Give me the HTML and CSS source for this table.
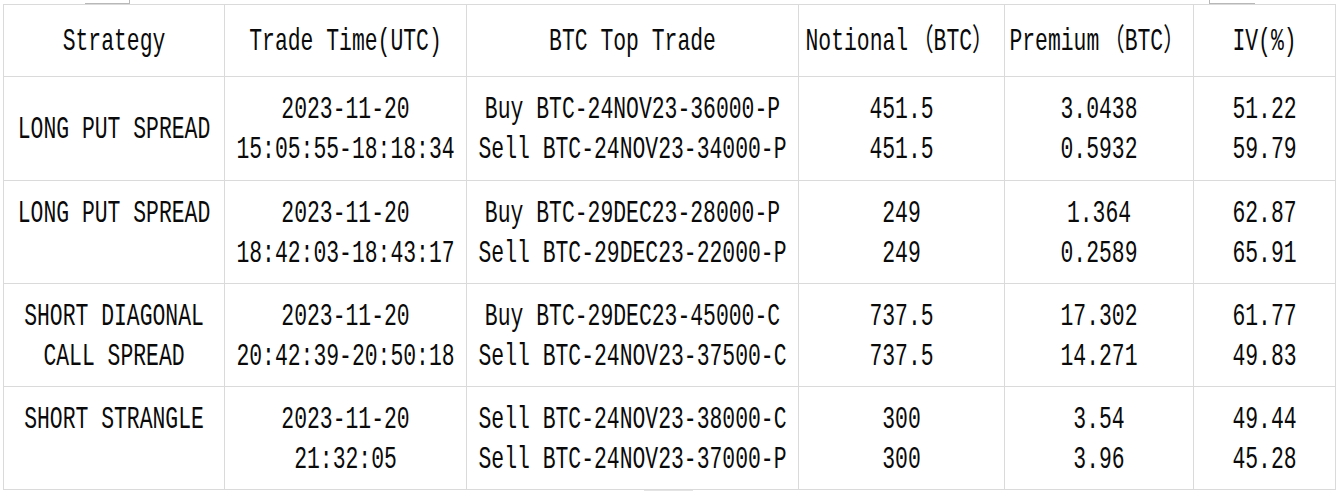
FILE: index.html
```html
<!DOCTYPE html>
<html>
<head>
<meta charset="utf-8">
<link rel="stylesheet" href="styles.css">
</head>
<body>
<div class="page">
  <span class="stub stub-a"></span>
  <span class="stub stub-b"></span>
  <span class="stub stub-c"></span>
  <div class="grid">
    <div class="cell head"><div class="txt"><div>Strategy</div></div></div>
    <div class="cell head"><div class="txt"><div>Trade Time(UTC)</div></div></div>
    <div class="cell head"><div class="txt"><div>BTC Top Trade</div></div></div>
    <div class="cell head"><div class="txt"><div>Notional<span class="fwl">（</span>BTC<span class="fwr">）</span></div></div></div>
    <div class="cell head"><div class="txt"><div>Premium<span class="fwl">（</span>BTC<span class="fwr">）</span></div></div></div>
    <div class="cell head"><div class="txt"><div>IV(%)</div></div></div>

    <div class="cell"><div class="txt"><div>LONG PUT SPREAD</div></div></div>
    <div class="cell"><div class="txt"><div>2023-11-20</div><div>15:05:55-18:18:34</div></div></div>
    <div class="cell"><div class="txt"><div>Buy BTC-24NOV23-36000-P</div><div>Sell BTC-24NOV23-34000-P</div></div></div>
    <div class="cell"><div class="txt"><div>451.5</div><div>451.5</div></div></div>
    <div class="cell"><div class="txt"><div>3.0438</div><div>0.5932</div></div></div>
    <div class="cell"><div class="txt"><div>51.22</div><div>59.79</div></div></div>

    <div class="cell"><div class="txt"><div>LONG PUT SPREAD</div><div>&nbsp;</div></div></div>
    <div class="cell"><div class="txt"><div>2023-11-20</div><div>18:42:03-18:43:17</div></div></div>
    <div class="cell"><div class="txt"><div>Buy BTC-29DEC23-28000-P</div><div>Sell BTC-29DEC23-22000-P</div></div></div>
    <div class="cell"><div class="txt"><div>249</div><div>249</div></div></div>
    <div class="cell"><div class="txt"><div>1.364</div><div>0.2589</div></div></div>
    <div class="cell"><div class="txt"><div>62.87</div><div>65.91</div></div></div>

    <div class="cell"><div class="txt"><div>SHORT DIAGONAL</div><div>CALL SPREAD</div></div></div>
    <div class="cell"><div class="txt"><div>2023-11-20</div><div>20:42:39-20:50:18</div></div></div>
    <div class="cell"><div class="txt"><div>Buy BTC-29DEC23-45000-C</div><div>Sell BTC-24NOV23-37500-C</div></div></div>
    <div class="cell"><div class="txt"><div>737.5</div><div>737.5</div></div></div>
    <div class="cell"><div class="txt"><div>17.302</div><div>14.271</div></div></div>
    <div class="cell"><div class="txt"><div>61.77</div><div>49.83</div></div></div>

    <div class="cell"><div class="txt"><div>SHORT STRANGLE</div><div>&nbsp;</div></div></div>
    <div class="cell"><div class="txt"><div>2023-11-20</div><div>21:32:05</div></div></div>
    <div class="cell"><div class="txt"><div>Sell BTC-24NOV23-38000-C</div><div>Sell BTC-24NOV23-37000-P</div></div></div>
    <div class="cell"><div class="txt"><div>300</div><div>300</div></div></div>
    <div class="cell"><div class="txt"><div>3.54</div><div>3.96</div></div></div>
    <div class="cell"><div class="txt"><div>49.44</div><div>45.28</div></div></div>
  </div>
</div>
</body>
</html>
```

FILE: styles.css
```css
html, body {
  margin: 0;
  padding: 0;
  background: #ffffff;
}

.page {
  position: relative;
  width: 1338px;
  height: 492px;
  padding: 4px 0 0 3px;
  box-sizing: border-box;
}

.grid {
  display: grid;
  grid-template-columns: 220px 241px 331px 205px 188px 141px;
  grid-template-rows: 71px 103px 102px 102px 102px;
  gap: 1px;
  padding: 1px;
  background: #dadada;
  width: max-content;
}

.cell {
  background: #ffffff;
  display: flex;
  align-items: center;
  justify-content: center;
  padding-top: 5px;
  box-sizing: border-box;
}

.txt {
  font-family: "Liberation Mono", "Noto Sans CJK SC", monospace;
  font-size: 21.4px;
  line-height: 27.8px;
  color: #0a0a0a;
  text-align: center;
  white-space: pre;
  transform: scaleY(1.44);
}

.fwl {
  margin-left: 4px;
}

.fwr {
  margin-right: 4px;
}

.stub {
  position: absolute;
  border-color: #b8b8b8;
  border-style: solid;
  border-width: 0;
}

.stub-a {
  left: 85px;
  top: 0;
  width: 44px;
  height: 3px;
  border-bottom-width: 1px;
  border-right-width: 1px;
}

.stub-b {
  left: 1209px;
  top: 0;
  width: 45px;
  height: 3px;
  border-bottom-width: 1px;
  border-left-width: 1px;
}

.stub-c {
  left: 644px;
  top: 490px;
  width: 49px;
  height: 1px;
  border-top-width: 1px;
  border-color: #e4e4e4;
}
```
